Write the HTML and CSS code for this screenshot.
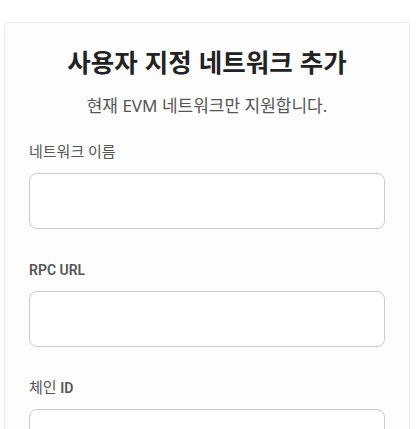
FILE: index.html
```html
<!DOCTYPE html>
<html lang="ko">
<head>
<meta charset="utf-8">
<title>사용자 지정 네트워크 추가</title>
<link rel="stylesheet" href="styles.css">
</head>
<body>
<div class="page">
  <div class="card">
    <h1 class="title">사용자 지정 네트워크 추가</h1>
    <p class="subtitle">현재 EVM 네트워크만 지원합니다.</p>
    <div class="field">
      <label class="label" for="name">네트워크 이름</label>
      <input class="input" id="name" type="text">
    </div>
    <div class="field">
      <label class="label" for="rpc"><span class="latin">RPC URL</span></label>
      <input class="input" id="rpc" type="text">
    </div>
    <div class="field">
      <label class="label" for="chain">체인 <span class="latin">ID</span></label>
      <input class="input" id="chain" type="text">
    </div>
  </div>
</div>
</body>
</html>
```
FILE: styles.css
```css
html, body {
  margin: 0;
  padding: 0;
  background: #ffffff;
}
body {
  font-family: "Noto Sans", "Noto Sans CJK KR", sans-serif;
  overflow: hidden;
}
.page {
  padding: 22px 6px 0 4px;
}
.card {
  background: #fdfdfd;
  border: 1px solid #ebebeb;
  border-radius: 3px;
  padding: 23px 24px 0 24px;
  display: flex;
  flex-direction: column;
}
.title {
  margin: 0;
  text-align: center;
  font-family: "Noto Sans CJK KR", sans-serif;
  font-weight: 700;
  font-size: 25.5px;
  line-height: 30px;
  color: #222222;
}
.subtitle {
  margin: 18px 0 24px 0;
  text-align: center;
  font-size: 17px;
  line-height: 24px;
  color: #555555;
}
.field {
  display: flex;
  flex-direction: column;
  margin-bottom: 31px;
}
.label {
  font-family: Roboto, "Noto Sans CJK KR", sans-serif;
  font-weight: 400;
  font-size: 15px;
  line-height: 20px;
  color: #555555;
  margin-bottom: 11px;
}
.latin {
  font-weight: 600;
  font-size: 14px;
}
.input {
  box-sizing: border-box;
  height: 56px;
  width: 100%;
  border: 1px solid #cccccc;
  border-radius: 8px;
  background: #ffffff;
  margin: 0;
  padding: 0 14px;
  font-size: 14px;
  outline: none;
}
```
